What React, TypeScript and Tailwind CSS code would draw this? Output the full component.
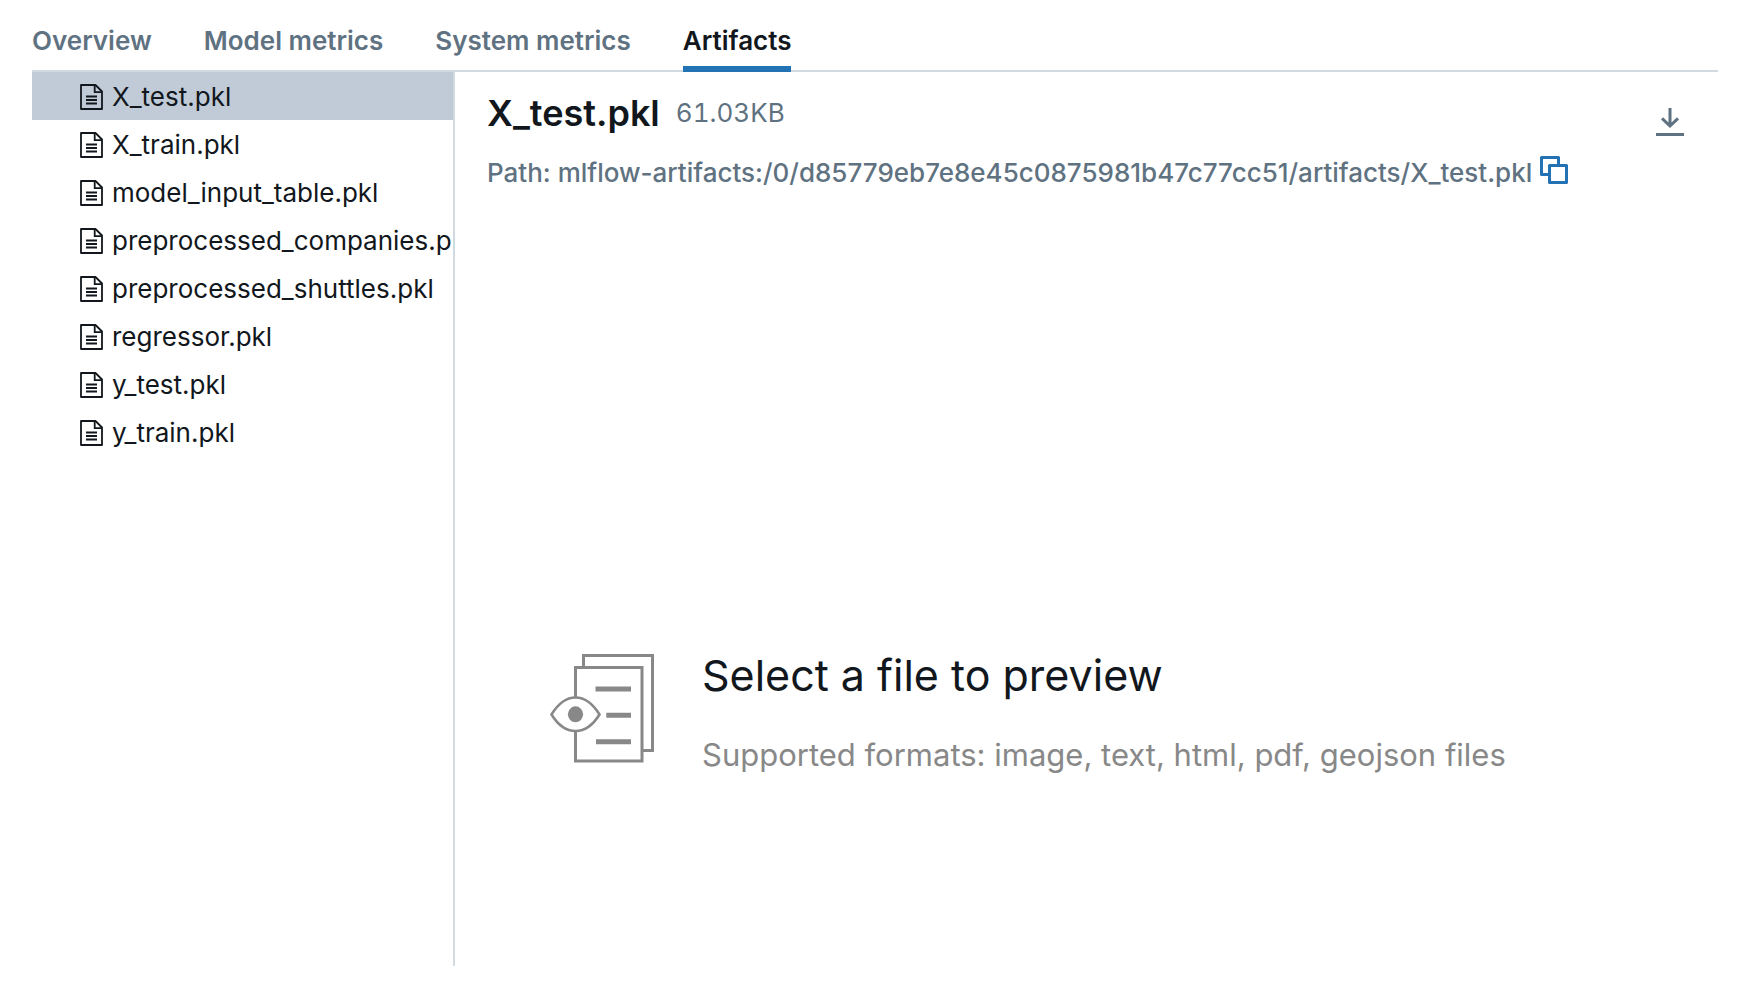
const tabs = ["Overview", "Model metrics", "System metrics", "Artifacts"];

const files = [
  "X_test.pkl",
  "X_train.pkl",
  "model_input_table.pkl",
  "preprocessed_companies.pkl",
  "preprocessed_shuttles.pkl",
  "regressor.pkl",
  "y_test.pkl",
  "y_train.pkl",
];

function FileIcon() {
  return (
    <svg className="h-[26px] w-[23px] shrink-0" viewBox="0 0 23 26" fill="none" stroke="currentColor" strokeWidth="1.8" strokeLinejoin="round" aria-hidden="true">
      <path d="M1 1h14.5L22 7.5V25H1Z" />
      <path d="M14.7 1v7.2H22M6 12.5h11M6 16h11M6 19.5h11" />
    </svg>
  );
}

function CopyIcon() {
  return (
    <svg className="h-7 w-7" viewBox="0 0 28 28" fill="none" stroke="currentColor" strokeWidth="3" strokeLinejoin="round" aria-hidden="true">
      <path d="M9.5 18.5h-8v-17h17v8" />
      <path d="M9.5 9.5h17v17h-17Z" />
    </svg>
  );
}

function DownloadIcon() {
  return (
    <svg className="h-7 w-7" viewBox="0 0 28 28" fill="none" stroke="currentColor" strokeWidth="3" aria-hidden="true">
      <path d="M14 0v18M6 10.3l8 7.7 8-7.7M0 26.5h28" />
    </svg>
  );
}

function PreviewIcon() {
  return (
    <svg className="h-[110px] w-[106px] shrink-0" viewBox="0 0 106 110" fill="none" stroke="#888888" strokeWidth="3" aria-hidden="true">
      <path d="M33.5 13V1.5h69V96.5H93" />
      <path d="M25.5 13.5h66.5v93.5h-66.5Z" fill="#fff" />
      <path d="M45.5 35h35.5M56.3 61.3h24.7M46 87.8h35" strokeWidth="5" />
      <path d="M1.5 60.5C8 50 16 43.5 25.5 43.5S43 50 49.5 60.5C43 71 35 77 25.5 77S8 71 1.5 60.5Z" fill="#fff" strokeWidth="2.6" />
      <ellipse cx="25.5" cy="60.3" rx="7.6" ry="8" fill="#888888" stroke="none" />
    </svg>
  );
}

export default function App() {
  return (
    <div className="flex min-h-screen flex-col bg-white px-8 pb-4 font-['Inter',sans-serif] text-[26px] leading-8 text-[#11171c]">
      <nav className="flex h-[72px] gap-[52px] border-b-2 border-[#d1d9e1]" aria-label="Run sections">
        {tabs.map((tab) => {
          const active = tab === "Artifacts";
          return (
            <a
              key={tab}
              href="#"
              aria-current={active ? "page" : undefined}
              className={
                active
                  ? "-mb-0.5 border-b-6 border-[#2272b4] pt-[25px] font-semibold"
                  : "pt-[25px] font-semibold text-[#5f7281]"
              }
            >
              {tab}
            </a>
          );
        })}
      </nav>
      <div className="flex flex-1">
        <aside className="w-[423px] shrink-0 overflow-hidden border-r-2 border-[#d1d9e1]">
          <ul>
            {files.map((file, i) => (
              <li key={file}>
                <button
                  type="button"
                  className={
                    i === 0
                      ? "flex h-12 w-full items-center gap-[9px] bg-[#c0cbd7] pt-0.5 pl-12 text-left whitespace-nowrap"
                      : "flex h-12 w-full items-center gap-[9px] pt-0.5 pl-12 text-left whitespace-nowrap"
                  }
                >
                  <FileIcon />
                  {file}
                </button>
              </li>
            ))}
          </ul>
        </aside>
        <main className="flex min-w-0 flex-1 flex-col pl-8">
          <header className="flex items-start justify-between pt-4 pr-[34px] text-[#5f7281]">
            <div>
              <div className="flex items-center gap-4">
                <h1 className="text-[36px] leading-[50px] font-semibold text-[#11171c]">X_test.pkl</h1>
                <span className="tabular-nums">61.03KB</span>
              </div>
              <div className="flex items-start gap-2 pt-[18px]">
                <span className="pt-px font-medium">Path: mlflow-artifacts:/0/d85779eb7e8e45c0875981b47c77cc51/artifacts/X_test.pkl</span>
                <button type="button" aria-label="Copy path" className="text-[#2272b4]">
                  <CopyIcon />
                </button>
              </div>
            </div>
            <button type="button" aria-label="Download artifact" className="pt-5">
              <DownloadIcon />
            </button>
          </header>
          <section className="flex flex-1 items-center gap-[46px] pt-[262px] pl-[63px]">
            <PreviewIcon />
            <div className="pt-1">
              <h2 className="text-[43px] leading-[56px]">Select a file to preview</h2>
              <p className="pt-8 text-[31px] leading-10 text-[#888888]">Supported formats: image, text, html, pdf, geojson files</p>
            </div>
          </section>
        </main>
      </div>
    </div>
  );
}
